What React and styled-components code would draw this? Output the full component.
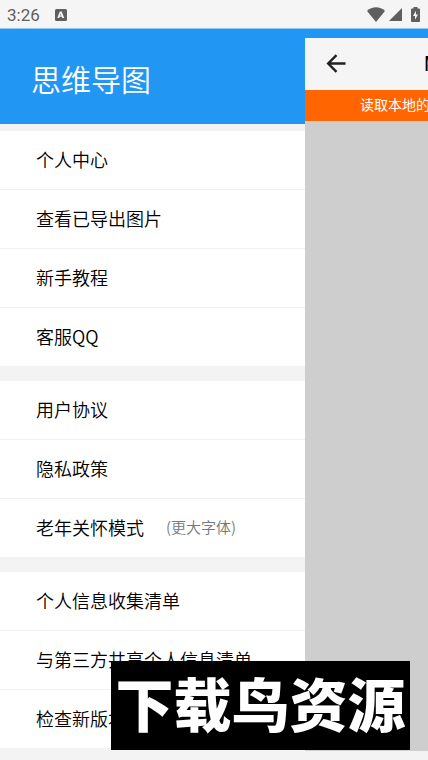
import React from "react";
import styled, { createGlobalStyle } from "styled-components";

const GlobalStyle = createGlobalStyle`
  *, *::before, *::after { box-sizing: border-box; }
  body {
    margin: 0;
    background: #f3f3f3;
    font-family: Roboto, "Noto Sans CJK SC", sans-serif;
    color: #000;
  }
  button { font: inherit; color: inherit; border: 0; padding: 0; cursor: pointer; }
`;

const Screen = styled.div`
  position: relative;
  display: flex;
  flex-direction: column;
  height: 100vh;
  overflow: hidden;
`;

const StatusBar = styled.div`
  display: flex;
  align-items: center;
  flex: none;
  height: 28px;
  padding: 2px 8px 0 7px;
  background: #f5f5f5;
  color: #5f5f5f;
  font-size: 17px;
  line-height: 26px;
`;

const Clock = styled.time`
  margin-right: 15px;
`;

const StatusIcons = styled.div`
  display: flex;
  align-items: center;
  gap: 4px;
  height: 24px;
  margin: 0 0 2px auto;
`;

const StatusIcon = styled.svg`
  display: block;
  fill: #5f5f5f;
`;

const BatteryIcon = styled(StatusIcon)`
  margin-left: 5px;
`;

const Main = styled.div`
  display: flex;
  flex: 1;
  min-height: 0;
`;

const Drawer = styled.aside`
  flex: 0 0 305px;
  overflow: hidden;
`;

const DrawerHeader = styled.header`
  display: flex;
  align-items: center;
  height: 96px;
  margin-bottom: 7px;
  padding: 2px 31px 0;
  background: #2196f3;
  border-top: 1px solid #8ac6f6;
`;

const DrawerTitle = styled.h1`
  margin: 0;
  color: #fff;
  font-family: "Noto Sans CJK SC", sans-serif;
  font-size: 30px;
  font-weight: 350;
  line-height: 40px;
`;

const MenuGroup = styled.ul`
  margin: 0 0 15px;
  padding: 0;
  list-style: none;
  background: #fff;
`;

const MenuItem = styled.li`
  & + & { border-top: 1px solid #f0f0f0; }
`;

const MenuButton = styled.button`
  display: flex;
  align-items: center;
  gap: 22px;
  width: 100%;
  height: 58px;
  padding: 0 36px 2px;
  background: none;
  font-family: "Noto Sans CJK SC", sans-serif;
  font-size: 18px;
  font-weight: 350;
  line-height: 26px;
  white-space: nowrap;
`;

const Hint = styled.span`
  color: #737878;
  font-size: 15px;
`;

const PageArea = styled.div`
  display: flex;
  flex-direction: column;
  flex: 1;
  min-width: 0;
  padding: 9px 0;
  background: linear-gradient(#2196f3 9px, #f3f3f3 9px);
  border-top: 1px solid #8ac6f6;
`;

const Page = styled.main`
  display: flex;
  flex-direction: column;
  flex: 1;
  overflow: hidden;
  background: #cecece;
`;

const PageBar = styled.div`
  display: flex;
  align-items: center;
  flex: none;
  height: 52px;
  padding-left: 17px;
  background: #f5f5f5;
`;

const BackButton = styled.button`
  display: grid;
  place-items: center;
  flex: none;
  width: 28px;
  height: 28px;
  margin-right: 74px;
  background: none;
`;

const PageTitle = styled.h2`
  margin: 0;
  font-size: 20px;
  font-weight: 400;
`;

const Notice = styled.p`
  flex: none;
  margin: 0;
  padding-left: 55px;
  background: #ff6602;
  color: #fff;
  font-size: 14px;
  line-height: 31px;
  white-space: nowrap;
`;

const Watermark = styled.div`
  position: absolute;
  right: 18px;
  bottom: 10px;
  display: grid;
  place-items: center;
  width: 299px;
  height: 89px;
  padding-bottom: 8px;
  background: #000;
  color: #fff;
  font-family: "Noto Sans CJK SC", sans-serif;
  font-size: 58px;
  font-weight: 900;
  line-height: 80px;
  white-space: nowrap;
`;

const groups = [
  [{ label: "个人中心" }, { label: "查看已导出图片" }, { label: "新手教程" }, { label: "客服QQ" }],
  [{ label: "用户协议" }, { label: "隐私政策" }, { label: "老年关怀模式", hint: "(更大字体)" }],
  [{ label: "个人信息收集清单" }, { label: "与第三方共享个人信息清单" }, { label: "检查新版本" }],
];

export default function App() {
  return (
    <>
      <GlobalStyle />
      <Screen>
        <StatusBar>
          <Clock>3:26</Clock>
          <StatusIcon width="12" height="13" viewBox="0 0 12 13" aria-hidden="true">
            <path fillRule="evenodd" d="M1.500 0h9A1.500 1.500 0 0 1 12 1.500v9a1.500 1.500 0 0 1-1.500 1.500h-9A1.500 1.500 0 0 1 0 10.500v-9A1.500 1.500 0 0 1 1.500 0ZM4.800 2.500 2.300 9h1.900l.4-1.200h2.300L7.300 9h1.900L6.700 2.500ZM5.750 4.500l.6 1.900H5.150Z" />
          </StatusIcon>
          <StatusIcons>
            <StatusIcon width="18" height="15" viewBox="0 0 18 15" aria-hidden="true">
              <path d="M9 15 0 4C2.500 1.500 5.500.3 9 .3S15.500 1.500 18 4Z" />
            </StatusIcon>
            <StatusIcon width="13" height="13" viewBox="0 0 13 13" aria-hidden="true">
              <path d="M13 0v13H0Z" />
            </StatusIcon>
            <BatteryIcon width="9" height="15" viewBox="0 0 9 15" aria-hidden="true">
              <path fillRule="evenodd" d="M2.500 0h4v1.500H8a1 1 0 0 1 1 1V14a1 1 0 0 1-1 1H1a1 1 0 0 1-1-1V2.500a1 1 0 0 1 1-1h1.500ZM5 3.800 2 9h2v3.800L7 7.500H5Z" />
            </BatteryIcon>
          </StatusIcons>
        </StatusBar>
        <Main>
          <Drawer>
            <DrawerHeader>
              <DrawerTitle>思维导图</DrawerTitle>
            </DrawerHeader>
            <nav>
              {groups.map((items) => (
                <MenuGroup key={items[0].label}>
                  {items.map(({ label, hint }) => (
                    <MenuItem key={label}>
                      <MenuButton type="button">
                        {label}
                        {hint && <Hint>{hint}</Hint>}
                      </MenuButton>
                    </MenuItem>
                  ))}
                </MenuGroup>
              ))}
            </nav>
          </Drawer>
          <PageArea>
            <Page>
              <PageBar>
                <BackButton type="button" aria-label="返回">
                  <svg width="20" height="20" viewBox="0 0 20 20" fill="none" stroke="#222" strokeWidth="2.400" aria-hidden="true">
                    <path d="M19.500 9.500H2M10.500 1.200 2.200 9.500l8.300 8.300" />
                  </svg>
                </BackButton>
                <PageTitle>M</PageTitle>
              </PageBar>
              <Notice>读取本地的</Notice>
            </Page>
          </PageArea>
        </Main>
        <Watermark>下载鸟资源</Watermark>
      </Screen>
    </>
  );
}
